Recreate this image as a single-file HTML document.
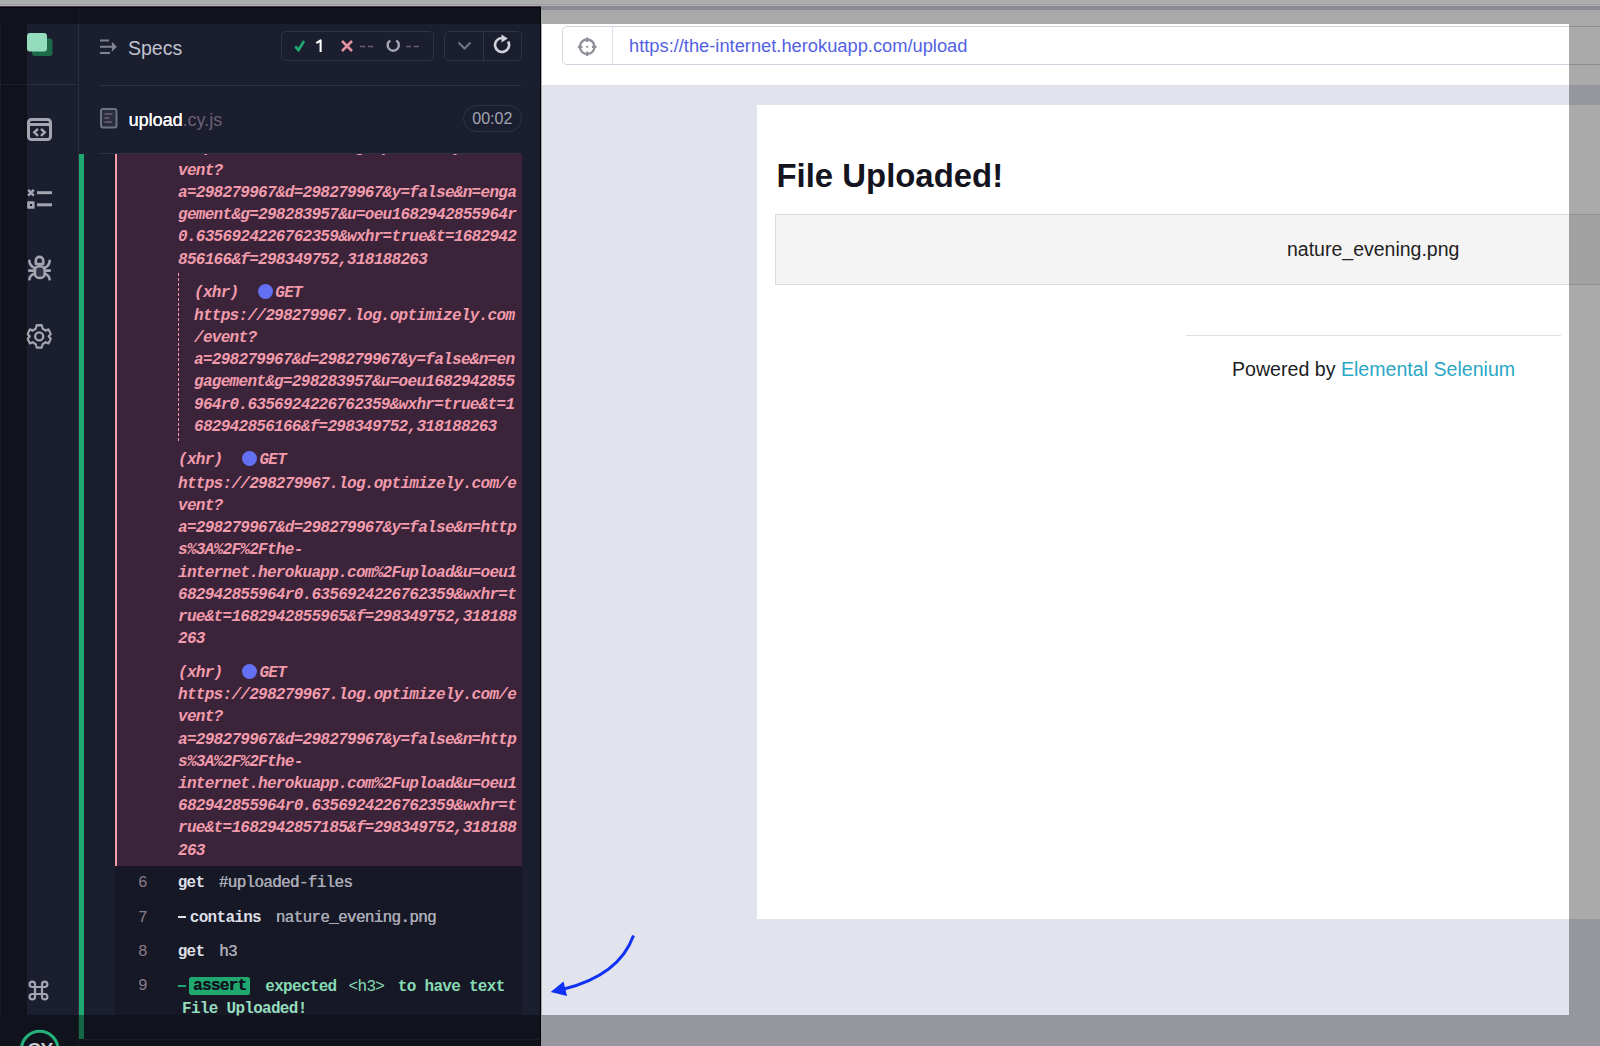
<!DOCTYPE html>
<html><head><meta charset="utf-8">
<style>
*{margin:0;padding:0;box-sizing:border-box}
html,body{width:1600px;height:1046px;overflow:hidden;background:#1b1e2e;font-family:"Liberation Sans",sans-serif;position:relative}
.a{position:absolute}
.log{position:absolute;transform:translateY(2.4px);font:bold italic 16px/22.2px "Liberation Mono",monospace;letter-spacing:-0.705px;color:#f29bac;white-space:pre}
.m{position:absolute;font:bold 16px/22.2px "Liberation Mono",monospace;letter-spacing:-0.705px;white-space:pre}
.ov{position:absolute;background:rgba(0,0,0,0.333)}
.dot{display:inline-block;width:15px;height:15px;border-radius:50%;background:#6470f3;vertical-align:-2px}
</style></head><body>
<!-- left panel -->
<div class="a" style="left:0;top:0;width:540px;height:1046px;background:#1b1e2e"></div>
<div class="a" style="left:78px;top:0;width:1px;height:1046px;background:#2a2e40"></div>
<div class="a" style="left:0;top:84px;width:78px;height:1px;background:#2a2e40"></div>
<div class="a" style="left:540px;top:0;width:1px;height:1046px;background:#000"></div>

<!-- nav icons -->
<svg class="a" style="left:0;top:0" width="78" height="1046" viewBox="0 0 78 1046">
  <!-- logo -->
  <rect x="32" y="38.5" width="20.5" height="17.5" rx="3" fill="#1d6a4b"/>
  <rect x="27" y="33" width="20" height="18.5" rx="3" fill="#94dcbd"/>
  <!-- code window -->
  <rect x="28.5" y="119.5" width="22" height="20" rx="3" fill="none" stroke="#a3a5b1" stroke-width="3"/>
  <rect x="29" y="123" width="21" height="3" fill="#a3a5b1"/>
  <path d="M38 128.8 L34.3 132.3 L38 135.8 M41 128.8 L44.7 132.3 L41 135.8" fill="none" stroke="#a3a5b1" stroke-width="2.5"/>
  <!-- list -->
  <path d="M28.2 189.8 L33.8 195.6 M33.8 189.8 L28.2 195.6" stroke="#a3a5b1" stroke-width="2.6"/>
  <rect x="37" y="191.2" width="15" height="3" fill="#a3a5b1"/>
  <rect x="27.2" y="201.2" width="7.4" height="7.6" rx="0.8" fill="#a3a5b1"/>
  <rect x="30" y="204" width="2" height="2" fill="#12141f"/>
  <rect x="37" y="203.3" width="15" height="3" fill="#a3a5b1"/>
  <!-- bug -->
  <rect x="35.5" y="267" width="8" height="9" rx="2" fill="#2f3448"/>
  <g fill="none" stroke="#a3a5b1" stroke-width="2.6" stroke-linecap="round" stroke-linejoin="round">
    <path d="M35.8 264 V260.6 A3.7 3.7 0 0 1 43.2 260.6 V264 Z"/>
    <rect x="34.9" y="266.3" width="9.8" height="11.6" rx="4.2"/>
    <path d="M29.3 260.8 Q29.8 265.5 34 267.6 M49.7 260.8 Q49.2 265.5 45 267.6 M29.2 270.6 H34 M49.8 270.6 H45 M34 273.8 Q29.8 275.5 29.4 279.3 M45 273.8 Q49.2 275.5 49.6 279.3"/>
  </g>
  <!-- gear -->
  <g transform="translate(39.2,336.4)">
    <path fill="none" stroke="#a3a5b1" stroke-width="2.4" stroke-linejoin="round" d="M-3 -11.5 H3 L4 -8 L7.5 -6 L10.8 -7.2 L13.5 -2.5 L11 0 L13.5 2.5 L10.8 7.2 L7.5 6 L4 8 L3 11.5 H-3 L-4 8 L-7.5 6 L-10.8 7.2 L-13.5 2.5 L-11 0 L-13.5 -2.5 L-10.8 -7.2 L-7.5 -6 L-4 -8 Z" transform="scale(0.86,0.97)"/>
    <circle r="4" fill="none" stroke="#a3a5b1" stroke-width="2.4"/>
  </g>
  <!-- cmd -->
  <g fill="none" stroke="#a3a5b1" stroke-width="2.2">
    <path d="M35 987 V984.3 A2.7 2.7 0 1 0 32.3 987 H44.7 A2.7 2.7 0 1 0 42 984.3 V996.7 A2.7 2.7 0 1 0 44.7 994 H32.3 A2.7 2.7 0 1 0 35 996.7 Z"/>
  </g>
</svg>

<!-- right / AUT -->
<div class="a" style="left:541px;top:0;width:1059px;height:1046px;background:#e1e3ed"></div>
<div class="a" style="left:541px;top:24px;width:1px;height:991px;background:#a9aab1;z-index:3"></div>
<div class="a" style="left:541px;top:0;width:1059px;height:86px;background:#fff;border-bottom:1px solid #dcdee8"></div>
<div class="a" style="left:561.5px;top:26px;width:1100px;height:39px;border:1px solid #d2d5e1;border-radius:5px;background:#fff"></div>
<div class="a" style="left:612px;top:27px;width:1px;height:37px;background:#dfe1ea"></div>
<svg class="a" style="left:576px;top:36px" width="22" height="22" viewBox="0 0 22 22">
  <circle cx="11.2" cy="10.8" r="7.3" fill="none" stroke="#8d8f99" stroke-width="2.3"/>
  <path d="M11.2 1.5 V6 M11.2 15.6 V20.1 M1.9 10.8 H6.4 M16 10.8 H20.5" stroke="#8d8f99" stroke-width="2.2"/>
  <circle cx="11.2" cy="10.8" r="1.1" fill="#8d8f99"/>
</svg>
<div class="a" style="left:629px;top:35px;font-size:18.3px;color:#5361e3;white-space:nowrap">https://the-internet.herokuapp.com/upload</div>
<div class="a" style="left:757px;top:105px;width:900px;height:813.5px;background:#fff"></div>

<!-- AUT content -->
<div class="a" style="left:776.5px;top:157.3px;font-weight:bold;font-size:32.9px;color:#141420;white-space:nowrap">File Uploaded!</div>
<div class="a" style="left:775px;top:214px;width:900px;height:71px;background:#f4f4f5;border:1px solid #dadadf"></div>
<div class="a" style="left:1287px;top:238px;font-size:19.5px;color:#222;white-space:nowrap">nature_evening.png</div>
<div class="a" style="left:1186px;top:335px;width:375px;height:1px;background:#dedee3"></div>
<div class="a" style="left:1232px;top:358px;font-size:19.6px;color:#1c1c24;white-space:nowrap">Powered by <span style="color:#2aa7c6">Elemental Selenium</span></div>

<!-- reporter header -->
<svg class="a" style="left:98px;top:36px" width="22" height="20" viewBox="0 0 22 20">
  <path d="M2 4.5 H11 M2 10.75 H14.5 M2 17 H12" stroke="#80838f" stroke-width="2"/>
  <path d="M13.9 5.75 L18.9 10.75 L13.9 15.75 Z" fill="#80838f"/>
</svg>
<div class="a" style="left:128px;top:36.8px;font-size:19.5px;color:#c0c2cf">Specs</div>

<div class="a" style="left:281px;top:31px;width:153px;height:30px;border:1px solid #2f3346;border-radius:5px"></div>
<svg class="a" style="left:281px;top:31px" width="153" height="30" viewBox="0 0 153 30">
  <path d="M14.2 15.5 L17.5 19 L23 10" fill="none" stroke="#1fa971" stroke-width="2.6"/>
  <path d="M61 10 L71 20 M71 10 L61 20" stroke="#e3919e" stroke-width="2.6"/>
  <path d="M79 15.5 H84 M87 15.5 H92" stroke="#6b5d70" stroke-width="1.6"/>
  <path d="M109.3 9.4 A5.6 5.6 0 1 0 115.2 9.4" fill="none" stroke="#a3a5b3" stroke-width="2.4"/>
  <path d="M125 15.5 H130 M133 15.5 H138" stroke="#6b5d70" stroke-width="1.6"/>
</svg>
<svg class="a" style="left:310px;top:36px" width="16" height="20" viewBox="310 36 16 20"><path d="M316.3 43.2 L320.6 40.3 V52" fill="none" stroke="#fff" stroke-width="2.1" stroke-linejoin="round"/></svg>

<div class="a" style="left:444px;top:31px;width:78px;height:30px;border:1px solid #2f3346;border-radius:5px"></div>
<div class="a" style="left:483px;top:32px;width:1px;height:28px;background:#2f3346"></div>
<svg class="a" style="left:444px;top:31px" width="78" height="30" viewBox="0 0 78 30">
  <path d="M14.5 11.5 L20.5 17.5 L26.5 11.5" fill="none" stroke="#737788" stroke-width="2"/>
  <path d="M64.1 10.5 A7 7 0 1 1 58 7" fill="none" stroke="#d2d3da" stroke-width="2.6"/>
  <path d="M57.5 3.5 L63.8 7.5 L57.5 11.5 Z" fill="#d2d3da"/>
</svg>

<div class="a" style="left:99px;top:85px;width:422px;height:1px;background:#2d3145"></div>

<svg class="a" style="left:99px;top:107px" width="20" height="23" viewBox="0 0 20 23">
  <rect x="2" y="2" width="15.5" height="18.5" rx="2" fill="#2a2d3f" stroke="#6f7282" stroke-width="2"/>
  <path d="M5.5 7 H13.5 M5.5 11 H10.5 M5.5 15 H13" stroke="#6f6272" stroke-width="1.5"/>
</svg>
<div class="a" style="left:128.5px;top:110px;font-size:18px;color:#fff;text-shadow:0.3px 0 0 #fff">upload<span style="color:#6d5e74;text-shadow:none">.cy.js</span></div>
<div class="a" style="left:463px;top:105px;width:59px;height:27px;border:1px solid #2f3346;border-radius:14px"></div>
<div class="a" style="left:472.3px;top:110.2px;font-size:16px;color:#a2a5b3">00:02</div>

<!-- command log -->
<div class="a" style="left:79px;top:154px;width:5px;height:885px;background:#1fa971"></div>
<div class="a" style="left:84px;top:1039px;width:456px;height:1px;background:#2c3042"></div>
<div class="a" style="left:99px;top:153px;width:422px;height:1px;background:#2d3145"></div>
<div class="a" style="left:113px;top:154px;width:2px;height:712px;background:#171927"></div>
<div class="a" style="left:117px;top:154px;width:405px;height:712px;background:#3b243a"></div>
<div class="a" style="left:114.8px;top:154px;width:2.4px;height:712px;background:#f79ca9"></div>
<div class="a" style="left:115px;top:866px;width:407px;height:149px;background:#161825"></div>

<div class="a" style="left:0;top:154px;width:540px;height:712px;overflow:hidden">
<div class="log" style="left:178px;top:-19.2px">https://298279967.log.optimizely.com/e</div>
<div class="log" style="left:178px;top:3.7px">vent?
a=298279967&amp;d=298279967&amp;y=false&amp;n=enga
gement&amp;g=298283957&amp;u=oeu1682942855964r
0.6356924226762359&amp;wxhr=true&amp;t=1682942
856166&amp;f=298349752,318188263</div>
</div>

<div class="a" style="left:178px;top:273px;width:0;height:168px;border-left:1px dashed #f59aa9"></div>
<div class="log" style="left:194px;top:279.5px">(xhr)</div>
<div class="a dot" style="left:257.8px;top:283.5px"></div>
<div class="log" style="left:275.3px;top:279.5px">GET</div>
<div class="log" style="left:194px;top:302.7px">https://298279967.log.optimizely.com
/event?
a=298279967&amp;d=298279967&amp;y=false&amp;n=en
gagement&amp;g=298283957&amp;u=oeu1682942855
964r0.6356924226762359&amp;wxhr=true&amp;t=1
682942856166&amp;f=298349752,318188263</div>

<div class="log" style="left:178px;top:447.3px">(xhr)</div>
<div class="a dot" style="left:242px;top:451px"></div>
<div class="log" style="left:259.4px;top:447.3px">GET</div>
<div class="log" style="left:178px;top:470.7px">https://298279967.log.optimizely.com/e
vent?
a=298279967&amp;d=298279967&amp;y=false&amp;n=http
s%3A%2F%2Fthe-
internet.herokuapp.com%2Fupload&amp;u=oeu1
682942855964r0.6356924226762359&amp;wxhr=t
rue&amp;t=1682942855965&amp;f=298349752,318188
263</div>

<div class="log" style="left:178px;top:660px">(xhr)</div>
<div class="a dot" style="left:242px;top:663.6px"></div>
<div class="log" style="left:259.4px;top:660px">GET</div>
<div class="log" style="left:178px;top:682.2px">https://298279967.log.optimizely.com/e
vent?
a=298279967&amp;d=298279967&amp;y=false&amp;n=http
s%3A%2F%2Fthe-
internet.herokuapp.com%2Fupload&amp;u=oeu1
682942855964r0.6356924226762359&amp;wxhr=t
rue&amp;t=1682942857185&amp;f=298349752,318188
263</div>

<!-- command rows -->
<div class="m" style="left:138px;top:871.5px;font-weight:normal;color:#8b7b8a">6</div>
<div class="m" style="left:177.7px;top:871.5px;color:#dddee6">get</div>
<div class="m" style="left:218.7px;top:871.5px;font-weight:normal;color:#a9aab6;text-shadow:0.4px 0 0 #a9aab6">#uploaded-files</div>

<div class="m" style="left:138px;top:906.5px;font-weight:normal;color:#8b7b8a">7</div>
<div class="a" style="left:177.8px;top:916px;width:8px;height:2.4px;background:#e2e3ea"></div>
<div class="m" style="left:189.8px;top:906.5px;color:#dddee6">contains</div>
<div class="m" style="left:275.7px;top:906.5px;font-weight:normal;color:#a9aab6;text-shadow:0.4px 0 0 #a9aab6">nature_evening.png</div>

<div class="m" style="left:138px;top:941px;font-weight:normal;color:#8b7b8a">8</div>
<div class="m" style="left:177.7px;top:941px;color:#dddee6">get</div>
<div class="m" style="left:219px;top:941px;font-weight:normal;color:#a9aab6;text-shadow:0.4px 0 0 #a9aab6">h3</div>

<div class="m" style="left:138px;top:975px;font-weight:normal;color:#8b7b8a">9</div>
<div class="a" style="left:178px;top:985px;width:8px;height:2.4px;background:#1fa971"></div>
<div class="a" style="left:189px;top:977px;width:61px;height:17.5px;background:#1fa971;border-radius:2.5px"></div>
<div class="m" style="left:193px;top:975px;color:#111320;text-shadow:0.35px 0 0 #111320">assert</div>
<div class="m" style="left:265.3px;top:975.7px;color:#86dbb5">expected</div>
<div class="m" style="left:348.6px;top:975.7px;font-weight:normal;color:#86dbb5">&lt;h3&gt;</div>
<div class="m" style="left:397.8px;top:975.7px;color:#86dbb5">to have text</div>
<div class="m" style="left:182px;top:997.5px;color:#96dcbf">File Uploaded!</div>

<!-- cy logo (above overlay) -->
<svg class="a" style="left:0;top:1020px;z-index:5" width="78" height="26" viewBox="0 1020 78 26">
  <circle cx="39.7" cy="1049.6" r="18.3" fill="none" stroke="#22b27a" stroke-width="3"/>
</svg>
<div class="a" style="left:26px;top:1039.7px;width:28px;font:bold 19px/19px 'Liberation Sans',sans-serif;color:#c9cad2;z-index:5;text-align:center;letter-spacing:-0.5px">CY</div>
<!-- annotation arrow -->
<svg class="a" style="left:540px;top:920px" width="110" height="90" viewBox="540 920 110 90">
  <path d="M633.5 935.5 C 624 962, 600 980, 564 989" fill="none" stroke="#1132f2" stroke-width="3"/>
  <path d="M550.7 992 L563.5 981.5 L567 996 Z" fill="#1132f2"/>
</svg>
<!-- overlays -->
<div class="ov" style="left:541px;top:0;width:1059px;height:24px"></div>
<div class="ov" style="left:0;top:0;width:541px;height:24px;background:rgba(0,0,0,0.39)"></div>
<div class="ov" style="left:1px;top:24px;width:25.5px;height:991.3px;background:rgba(0,0,0,0.39)"></div>
<div class="ov" style="left:0;top:24px;width:1px;height:991.3px;background:rgba(0,0,0,0.05)"></div>
<div class="ov" style="left:1569px;top:24px;width:31px;height:991.3px"></div>
<div class="ov" style="left:541px;top:1015.3px;width:1059px;height:31px"></div>
<div class="ov" style="left:0;top:1015.3px;width:541px;height:31px;background:rgba(0,0,0,0.39)"></div>
<div class="a" style="left:0;top:0;width:1600px;height:4px;background:#adadad"></div>
<div class="a" style="left:0;top:4px;width:1600px;height:1px;background:#9c9da3"></div>
<div class="a" style="left:0;top:5px;width:1600px;height:1px;background:#aeafb3"></div>
<div class="a" style="left:0;top:6px;width:541px;height:1px;background:#4a3344"></div>
<div class="a" style="left:0;top:7px;width:541px;height:1px;background:#05060b"></div>
<div class="a" style="left:541px;top:6px;width:1059px;height:3.8px;background:#888b91"></div>
<div class="a" style="left:541px;top:9.8px;width:1059px;height:2.7px;background:#a8a8aa"></div>
</body></html>
